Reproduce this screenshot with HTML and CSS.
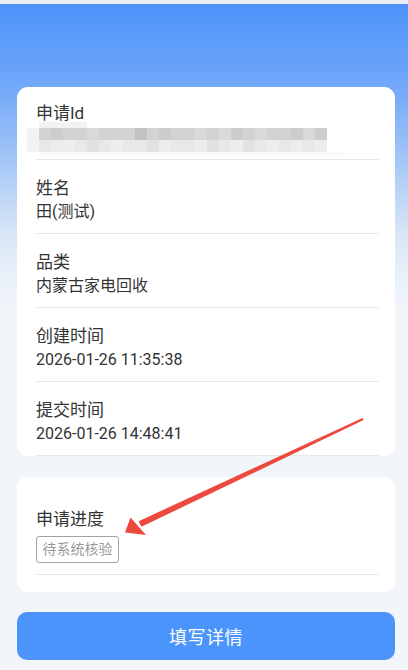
FILE: index.html
```html
<!DOCTYPE html>
<html lang="zh">
<head>
<meta charset="utf-8">
<title>申请详情</title>
<link rel="stylesheet" href="styles.css">
</head>
<body>
<div class="page">
  <div class="topstrip"></div>
  <main class="content">
    <section class="card">
      <div class="row first">
        <div class="label">申请Id</div>
        <div class="blur">
          <div class="blur-top"></div>
          <div class="blur-grid">
            <span class="e"></span><span class="a"></span><span class="b"></span><span class="a"></span><span class="a"></span><span class="c"></span><span class="a"></span><span class="a"></span><span class="a"></span><span class="d"></span><span class="a"></span><span class="b"></span><span class="a"></span><span class="a"></span><span class="c"></span><span class="a"></span><span class="c"></span><span class="b"></span><span class="a"></span><span class="c"></span><span class="a"></span><span class="a"></span><span class="b"></span><span class="c"></span><span class="b"></span>
            <span class="e"></span><span class="f"></span><span class="g"></span><span class="g"></span><span class="f"></span><span class="h"></span><span class="f"></span><span class="g"></span><span class="f"></span><span class="f"></span><span class="h"></span><span class="g"></span><span class="f"></span><span class="f"></span><span class="g"></span><span class="h"></span><span class="f"></span><span class="g"></span><span class="h"></span><span class="f"></span><span class="g"></span><span class="f"></span><span class="g"></span><span class="f"></span><span class="g"></span>
          </div>
          <div class="blur-bottom"></div>
        </div>
      </div>
      <div class="row">
        <div class="label">姓名</div>
        <div class="value">田(测试)</div>
      </div>
      <div class="row">
        <div class="label">品类</div>
        <div class="value">内蒙古家电回收</div>
      </div>
      <div class="row">
        <div class="label">创建时间</div>
        <div class="value">2026-01-26 11:35:38</div>
      </div>
      <div class="row">
        <div class="label">提交时间</div>
        <div class="value">2026-01-26 14:48:41</div>
      </div>
    </section>

    <section class="card progress">
      <div class="row prog-row">
        <div class="label">申请进度</div>
        <span class="tag">待系统核验</span>
      </div>
    </section>

    <button class="btn" type="button">填写详情</button>
  </main>

  <svg class="arrow" width="408" height="670" viewBox="0 0 408 670" aria-hidden="true">
    <polygon points="138.6,521.2 362.5,418 363.6,419.9 141.4,526.8" fill="#ec4a3e"/>
    <polygon points="125,532.5 130.5,517.5 146,535" fill="#ec4a3e"/>
  </svg>
</div>
</body>
</html>
```

FILE: styles.css
```css
* { box-sizing: border-box; }

html, body {
  margin: 0;
  padding: 0;
}

body {
  width: 408px;
  height: 670px;
  overflow: hidden;
  font-family: Roboto, "Noto Sans CJK SC", sans-serif;
  color: #333333;
  background: #f2f6fa;
}

.page {
  position: relative;
  width: 408px;
  height: 670px;
  background: linear-gradient(180deg, #4a91f9 0px, #6ea6f9 80px, #a3c6f6 160px, #d6e5f6 230px, #eaf1f9 280px, #f2f6fa 320px, #f2f6fa 100%);
}

.topstrip {
  height: 4px;
  background: #e9eef4;
}

.content {
  padding: 83px 13px 0 17px;
  display: flex;
  flex-direction: column;
}

.card {
  background: #ffffff;
  border-radius: 11px;
  padding: 0 16px 0 19px;
}

.row {
  border-bottom: 1px solid #e8e8e8;
  padding: 17px 0 10px;
  display: flex;
  flex-direction: column;
  gap: 2px;
}

.row.first {
  padding: 15px 0 7px;
  gap: 4px;
}

.label {
  font-size: 17px;
  line-height: 22px;
  color: #333333;
}

.value {
  font-size: 16px;
  line-height: 22px;
  color: #333333;
}

.blur {
  position: relative;
  height: 24px;
  margin-left: -9px;
}

.blur-top {
  position: absolute;
  left: 12px;
  top: -6px;
  width: 48px;
  height: 6px;
  background: #f2f2f2;
}

.blur-bottom {
  position: absolute;
  left: 12px;
  top: 24px;
  width: 306px;
  height: 3px;
  background: #f8f8f8;
}

.blur-grid {
  display: grid;
  grid-template-columns: repeat(25, 12px);
  grid-template-rows: 12px 12px;
}

.blur-grid span { display: block; }
.blur-grid .a { background: #d3d3d3; }
.blur-grid .b { background: #cdcdcd; }
.blur-grid .c { background: #d9d9d9; }
.blur-grid .d { background: #c2c2c2; }
.blur-grid .e { background: #f3f3f3; }
.blur-grid .f { background: #e8e8e8; }
.blur-grid .g { background: #ededed; }
.blur-grid .h { background: #e2e2e2; }

.progress {
  margin-top: 21px;
  padding-bottom: 17px;
}

.prog-row {
  padding: 31px 0 11px;
  gap: 6px;
  align-items: flex-start;
}

.tag {
  display: inline-block;
  height: 27px;
  line-height: 25px;
  padding: 0 5.5px;
  border: 1px solid #a3a3a3;
  border-radius: 3px;
  font-size: 14px;
  color: #9a9a9a;
}

.btn {
  margin-top: 20px;
  height: 48px;
  width: 378px;
  border: none;
  border-radius: 10px;
  background: #4b94fc;
  color: #ffffff;
  font-family: Roboto, "Noto Sans CJK SC", sans-serif;
  font-size: 18px;
  letter-spacing: 0.5px;
  padding: 0;
}

.arrow {
  position: absolute;
  left: 0;
  top: 0;
  pointer-events: none;
}
```
